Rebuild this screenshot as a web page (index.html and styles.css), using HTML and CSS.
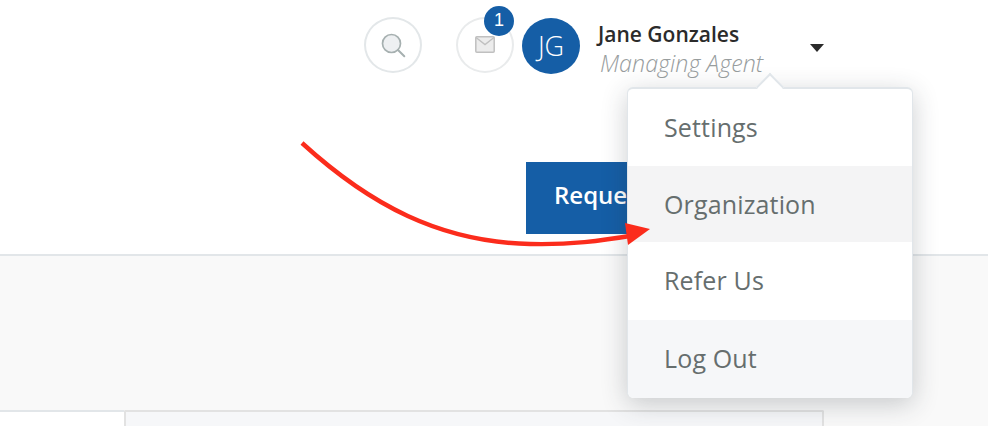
FILE: index.html
```html
<!DOCTYPE html>
<html lang="en">
<head>
<meta charset="utf-8">
<title>Account menu</title>
<link rel="stylesheet" href="styles.css">
</head>
<body>
<div class="page">
  <header class="header">
    <div class="topbar">
      <button class="round-btn search-btn" aria-label="Search">
        <svg width="28" height="28" viewBox="0 0 28 28"><circle cx="12.5" cy="12.5" r="9" fill="#eef0f2" stroke="#a6b0b0" stroke-width="1.7"/><path d="M19 19 L25.3 25.2" stroke="#a6b0b0" stroke-width="2" stroke-linecap="round"/></svg>
      </button>
      <button class="round-btn mail-btn" aria-label="Messages">
        <svg width="20" height="17" viewBox="0 0 20 17"><rect x="0.8" y="0.8" width="18.4" height="15.4" rx="1" fill="#ececec" stroke="#c0c0c0" stroke-width="1.5"/><path d="M1 1.5 L10 8.5 L19 1.5" fill="none" stroke="#c0c0c0" stroke-width="1.4"/></svg>
        <span class="badge">1</span>
      </button>
      <div class="avatar">JG</div>
      <div class="user">
        <div class="user-name">Jane Gonzales</div>
        <div class="user-role">Managing Agent</div>
      </div>
      <span class="caret"></span>
    </div>
    <div class="actions">
      <a class="primary-btn">Request</a>
    </div>
  </header>
  <main class="content">
    <div class="tabs">
      <div class="tab tab-active"></div>
      <div class="tab-panel"></div>
    </div>
  </main>
  <nav class="menu">
    <span class="menu-tip"></span>
    <a class="menu-item menu-first">Settings</a>
    <a class="menu-item menu-hover">Organization</a>
    <a class="menu-item menu-refer">Refer Us</a>
    <a class="menu-item menu-last">Log Out</a>
  </nav>
  <svg class="arrow" width="988" height="426" viewBox="0 0 988 426">
    <path d="M302 143 C 370 205, 440 242, 530 244 C 570 245, 600 241, 636 235" fill="none" stroke="#fb2c1c" stroke-width="4.4"/>
    <path d="M625 223 L650 229 L628 245 Z" fill="#fb2c1c"/>
  </svg>
</div>
</body>
</html>
```
FILE: styles.css
```css
* { box-sizing: border-box; }
html, body { margin: 0; padding: 0; }
body {
  width: 988px;
  height: 426px;
  overflow: hidden;
  background: #f9f9f9;
  font-family: "Open Sans", "Liberation Sans", sans-serif;
}
.page { position: relative; width: 988px; height: 426px; overflow: hidden; }
.header {
  height: 256px;
  background: #fff;
  border-bottom: 2px solid #e2e6e9;
  display: flex;
  flex-direction: column;
}
.topbar {
  display: flex;
  align-items: flex-start;
  padding: 17px 0 0 364px;
  height: 162px;
}
.round-btn {
  position: relative;
  flex: none;
  width: 58px;
  height: 56px;
  padding: 0;
  border-radius: 50%;
  background: #fff;
  border: 2px solid #e3e7e9;
  display: flex;
  align-items: center;
  justify-content: center;
}
.search-btn { margin-right: 34px; }
.mail-btn { border-color: #e9ebec; margin-right: 8px; }
.mail-btn svg { margin-top: -2px; }
.badge {
  position: absolute;
  top: -13px;
  right: -2px;
  width: 30px;
  height: 30px;
  border-radius: 50%;
  background: #155ea6;
  color: #fff;
  font-size: 18px;
  font-weight: 300;
  line-height: 29px;
  text-align: center;
}
.avatar {
  flex: none;
  width: 58px;
  height: 56px;
  margin-top: 1px;
  border-radius: 50%;
  background: #155ea6;
  color: #fff;
  font-size: 27px;
  font-weight: 300;
  line-height: 56px;
  text-align: center;
}
.user { margin-left: 18px; width: 210px; flex: none; }
.user-name {
  margin-top: 2px;
  font-size: 21px;
  font-weight: 600;
  line-height: 30px;
  color: #2b2b2b;
}
.user-role {
  font-size: 23.3px;
  font-style: italic;
  font-weight: 300;
  line-height: 29px;
  color: #989d9e;
  padding-left: 2px;
}
.caret {
  position: absolute;
  left: 810px;
  top: 44px;
  width: 0;
  height: 0;
  border-left: 7px solid transparent;
  border-right: 7px solid transparent;
  border-top: 8px solid #2b2b2b;
}
.actions { padding-left: 526px; }
.primary-btn {
  display: block;
  width: 220px;
  height: 72px;
  padding-left: 28px;
  background: #155ea6;
  color: #fff;
  font-size: 24px;
  font-weight: 600;
  line-height: 66px;
}
.content { height: 170px; padding-top: 154px; }
.tabs { display: flex; height: 16px; }
.tab-active {
  width: 124px;
  background: #fff;
  border-top: 2px solid #e2e6e9;
}
.tab-panel {
  width: 700px;
  background: #f6f7f9;
  border: 2px solid #e2e2e2;
  border-bottom: 0;
  border-radius: 2px 2px 0 0;
}
.menu {
  position: absolute;
  left: 627px;
  top: 87px;
  width: 286px;
  height: 311px;
  background: #fff;
  border: 1px solid #e1e6ea;
  border-top-width: 2px;
  border-bottom: 0;
  border-radius: 6px;
  box-shadow: 0 6px 26px rgba(40, 50, 60, 0.24);
  display: flex;
  flex-direction: column;
}
.menu-tip {
  position: absolute;
  left: 132px;
  top: -12px;
  width: 20px;
  height: 20px;
  background: #fff;
  border-top: 2px solid #e1e6ea;
  border-left: 2px solid #e1e6ea;
  transform: rotate(45deg);
}
.menu-item {
  position: relative;
  display: block;
  height: 77px;
  padding-left: 36px;
  color: #666e6e;
  font-size: 25px;
  letter-spacing: 0.15px;
  line-height: 76px;
}
.menu-hover { background: #f4f4f5; height: 76px; }
.menu-refer { height: 78px; }
.menu-last { background: #f6f7f9; height: 78px; border-radius: 0 0 6px 6px; }
.arrow { position: absolute; left: 0; top: 0; pointer-events: none; }
```
